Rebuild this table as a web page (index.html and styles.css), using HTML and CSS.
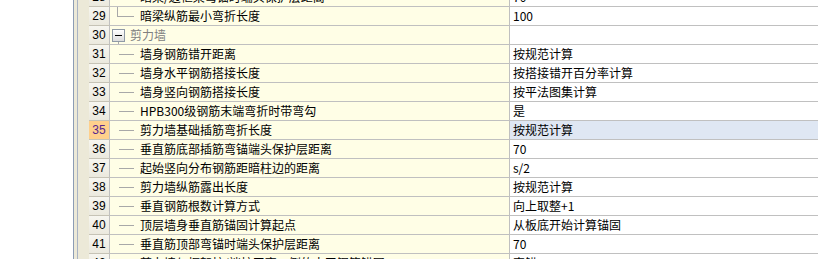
FILE: index.html
```html
<!DOCTYPE html>
<html>
<head>
<meta charset="utf-8">
<link rel="stylesheet" href="styles.css">
</head>
<body>
<div class="page">
  <div class="blank"></div>
  <div class="sidebar"></div>
  <div class="grid">
    <div class="row"><div class="num">28</div><div class="name"><span class="branch"></span>暗梁/边框梁弯锚时端头保护层距离</div><div class="val">70</div></div>
    <div class="row"><div class="num">29</div><div class="name"><span class="elbow"></span>暗梁纵筋最小弯折长度</div><div class="val">100</div></div>
    <div class="row"><div class="num">30</div><div class="name group"><span class="box"></span>剪力墙</div><div class="val"></div></div>
    <div class="row"><div class="num">31</div><div class="name"><span class="branch"></span>墙身钢筋错开距离</div><div class="val">按规范计算</div></div>
    <div class="row"><div class="num">32</div><div class="name"><span class="branch"></span>墙身水平钢筋搭接长度</div><div class="val">按搭接错开百分率计算</div></div>
    <div class="row"><div class="num">33</div><div class="name"><span class="branch"></span>墙身竖向钢筋搭接长度</div><div class="val">按平法图集计算</div></div>
    <div class="row"><div class="num">34</div><div class="name"><span class="branch"></span>HPB300级钢筋末端弯折时带弯勾</div><div class="val">是</div></div>
    <div class="row sel"><div class="num">35</div><div class="name"><span class="branch"></span>剪力墙基础插筋弯折长度</div><div class="val">按规范计算</div></div>
    <div class="row"><div class="num">36</div><div class="name"><span class="branch"></span>垂直筋底部插筋弯锚端头保护层距离</div><div class="val">70</div></div>
    <div class="row"><div class="num">37</div><div class="name"><span class="branch"></span>起始竖向分布钢筋距暗柱边的距离</div><div class="val">s/2</div></div>
    <div class="row"><div class="num">38</div><div class="name"><span class="branch"></span>剪力墙纵筋露出长度</div><div class="val">按规范计算</div></div>
    <div class="row"><div class="num">39</div><div class="name"><span class="branch"></span>垂直钢筋根数计算方式</div><div class="val">向上取整+1</div></div>
    <div class="row"><div class="num">40</div><div class="name"><span class="branch"></span>顶层墙身垂直筋锚固计算起点</div><div class="val">从板底开始计算锚固</div></div>
    <div class="row"><div class="num">41</div><div class="name"><span class="branch"></span>垂直筋顶部弯锚时端头保护层距离</div><div class="val">70</div></div>
    <div class="row"><div class="num">42</div><div class="name"><span class="branch"></span>剪力墙与框架柱/端柱平齐一侧的水平钢筋锚固</div><div class="val">直锚</div></div>
  </div>
</div>
</body>
</html>
```

FILE: styles.css
```css
html, body {
  margin: 0;
  padding: 0;
  background: #ffffff;
  overflow: hidden;
}
.page {
  display: flex;
  width: 818px;
  height: 259px;
  overflow: hidden;
}
.blank {
  width: 73px;
  flex: none;
  background: #ffffff;
}
.sidebar {
  width: 15px;
  flex: none;
  border-left: 1px solid #8c9cb4;
  background: linear-gradient(to right, #ece9d8 3px, #a9b3c4 3px, #a9b3c4 4px, #ece9d8 4px);
}
.grid {
  width: 729px;
  flex: none;
  margin-top: -12px;
  font-family: "Noto Sans CJK SC", "Liberation Sans", sans-serif;
  font-size: 12px;
  color: #000;
}
.row {
  display: flex;
  height: 19px;
}
.num {
  width: 21px;
  flex: none;
  box-sizing: border-box;
  height: 19px;
  border-right: 1px solid #c0c0c0;
  border-bottom: 1px solid #c6c3b6;
  background: linear-gradient(to bottom, #f7f6f0, #ebe9de);
  font-family: "Liberation Sans", "DejaVu Sans", sans-serif;
  font-size: 12px;
  line-height: 18px;
  text-align: center;
  color: #000;
}
.sel .num {
  background: #ffd08c;
  color: #56268f;
}
.name {
  width: 400px;
  flex: none;
  box-sizing: border-box;
  height: 19px;
  border-right: 1px solid #c0c0c0;
  border-bottom: 1px solid #c0c0c0;
  background: #fffee6;
  display: flex;
  align-items: center;
  padding-left: 9px;
  white-space: nowrap;
  overflow: hidden;
  line-height: 18px;
}
.val {
  flex: 1;
  box-sizing: border-box;
  height: 19px;
  border-bottom: 1px solid #c0c0c0;
  background: #ffffff;
  padding-left: 3px;
  line-height: 18px;
  white-space: nowrap;
  display: flex;
  align-items: center;
}
.sel .val {
  background: #dfe7f3;
}
.branch {
  display: inline-block;
  flex: none;
  width: 15px;
  height: 1px;
  background: #a8a8a8;
  margin-right: 6px;
}
.elbow {
  display: inline-block;
  flex: none;
  align-self: flex-start;
  width: 16px;
  height: 9px;
  border-left: 1px solid #a8a8a8;
  border-bottom: 1px solid #a8a8a8;
  margin-left: -2px;
  margin-right: 6px;
}
.group {
  color: #808080;
  padding-left: 2px;
}
.box {
  position: relative;
  display: inline-block;
  flex: none;
  width: 11px;
  height: 11px;
  border: 1px solid #8f9aa6;
  background: linear-gradient(to bottom, #ffffff, #dcdcdc);
  margin-right: 5px;
  margin-top: 1px;
}
.box::before {
  content: "";
  position: absolute;
  left: 2px;
  top: 5px;
  width: 7px;
  height: 1px;
  background: #000;
}
.box::after {
  content: "";
  position: absolute;
  left: 5px;
  top: 12px;
  width: 1px;
  height: 4px;
  background: #a8a8a8;
}
```
